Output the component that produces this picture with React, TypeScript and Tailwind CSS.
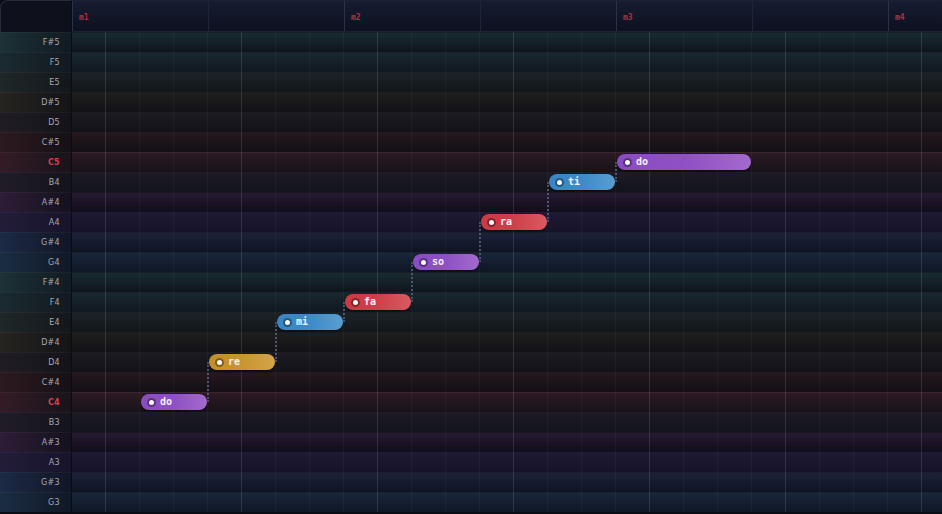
import React from 'react';

const ROWS = ['F#5', 'F5', 'E5', 'D#5', 'D5', 'C#5', 'C5', 'B4', 'A#4', 'A4', 'G#4', 'G4', 'F#4', 'F4', 'E4', 'D#4', 'D4', 'C#4', 'C4', 'B3', 'A#3', 'A3', 'G#3', 'G3'];

// per pitch class tint: [lane, key cell]
const TINT: Record<string, { lane: string; key: string }> = {
    'F#': { lane: 'bg-linear-to-b from-[#1a2b31] to-[#0e151c]', key: 'bg-linear-to-r from-[#1c3236] to-[#121a22]' },
    F: { lane: 'bg-linear-to-b from-[#192830] to-[#10181f]', key: 'bg-linear-to-r from-[#1a2b30] to-[#121920]' },
    E: { lane: 'bg-linear-to-b from-[#1c2326] to-[#12161b]', key: 'bg-linear-to-r from-[#1f2728] to-[#13171c]' },
    'D#': { lane: 'bg-linear-to-b from-[#201f1e] to-[#121215]', key: 'bg-linear-to-r from-[#25241f] to-[#141417]' },
    D: { lane: 'bg-linear-to-b from-[#1c1b22] to-[#121218]', key: 'bg-linear-to-r from-[#201e24] to-[#131319]' },
    'C#': { lane: 'bg-linear-to-b from-[#26181e] to-[#130f15]', key: 'bg-linear-to-r from-[#2c1a1f] to-[#151117]' },
    C: { lane: 'bg-linear-to-b from-[#2c1a23] to-[#17121a]', key: 'bg-linear-to-r from-[#341c25] to-[#18131b]' },
    B: { lane: 'bg-linear-to-b from-[#1c1b25] to-[#13131c]', key: 'bg-linear-to-r from-[#201d28] to-[#14141c]' },
    'A#': { lane: 'bg-linear-to-b from-[#271a32] to-[#100d18]', key: 'bg-linear-to-r from-[#2d1d37] to-[#15111d]' },
    A: { lane: 'bg-linear-to-b from-[#1f1a34] to-[#161329]', key: 'bg-linear-to-r from-[#231c39] to-[#16142a]' },
    'G#': { lane: 'bg-linear-to-b from-[#1b2239] to-[#0f1323]', key: 'bg-linear-to-r from-[#1c2a45] to-[#111626]' },
    G: { lane: 'bg-linear-to-b from-[#18263b] to-[#0f1624]', key: 'bg-linear-to-r from-[#1a2e43] to-[#101826]' },
};

const NOTE_COLORS: Record<string, string> = {
    purple: 'bg-linear-to-r from-[#8a4cc2] via-[#8e50c4] to-[#a36acc]',
    gold: 'bg-linear-to-r from-[#c28f2c] via-[#c8952f] to-[#d3a449]',
    blue: 'bg-linear-to-r from-[#3a84c4] via-[#3e8ac8] to-[#599ed1]',
    red: 'bg-linear-to-r from-[#c93a44] via-[#cf3f49] to-[#d95a62]',
};

const NOTES = [
    { label: 'do', row: 18, beat: 1, len: 1, color: 'purple' },
    { label: 're', row: 16, beat: 2, len: 1, color: 'gold' },
    { label: 'mi', row: 14, beat: 3, len: 1, color: 'blue' },
    { label: 'fa', row: 13, beat: 4, len: 1, color: 'red' },
    { label: 'so', row: 11, beat: 5, len: 1, color: 'purple' },
    { label: 'ra', row: 9, beat: 6, len: 1, color: 'red' },
    { label: 'ti', row: 7, beat: 7, len: 1, color: 'blue' },
    { label: 'do', row: 6, beat: 8, len: 2, color: 'purple' },
];

const BEAT = 68;
const ROW_H = 20;

function pitchClass(name: string) {
    return name.replace(/\d/g, '');
}

export default function App() {
    return (
        <div className="w-[942px] h-[514px] overflow-hidden bg-[#0b0d16]">
            {/* Ruler */}
            <div className="flex h-[32px]">
                <div className="w-[72px] shrink-0 rounded-tl-lg border-t border-l border-[#262b3c] border-r border-r-[#0a0c14] bg-[#0e111c]" />
                <div className="flex flex-1 overflow-hidden bg-linear-to-b from-[#161c31] to-[#0d1120] border-t border-[#1c2236] border-b border-b-[#1e2334]">
                    {Array.from({ length: 7 }).map((_, i) => (
                        <div
                            key={i}
                            className={`w-[136px] shrink-0 border-l ${i % 2 === 0 ? 'border-[#2c3148]' : 'border-[#1f2438]'}`}
                        >
                            {i % 2 === 0 && (
                                <span className="block pl-[6px] pt-[13px] text-[8px] font-bold leading-none text-[#b3303d]" style={{ fontFamily: '"DejaVu Sans Mono", monospace' }}>
                                    m{i / 2 + 1}
                                </span>
                            )}
                        </div>
                    ))}
                </div>
            </div>

            {/* Rows */}
            <div className="flex">
                <div className="w-[72px] shrink-0 border-r border-[#0a0c14]">
                    {ROWS.map((name) => {
                        const isC = pitchClass(name) === 'C';
                        return (
                            <div
                                key={name}
                                className={`h-[20px] flex items-center justify-end pr-[11px] border-t border-white/[0.04] ${TINT[pitchClass(name)].key}`}
                            >
                                <span
                                    className={`text-[8px] leading-none tracking-[0.3px] ${isC ? 'text-[#d9404c] font-bold' : 'text-[#a3a8b8]'}`}
                                    style={{ fontFamily: '"DejaVu Sans", sans-serif' }}
                                >
                                    {name}
                                </span>
                            </div>
                        );
                    })}
                </div>

                <div className="relative flex-1 overflow-hidden">
                    {ROWS.map((name) => (
                        <div
                            key={name}
                            className={`h-[20px] border-t ${pitchClass(name) === 'C' ? 'border-[#3a2630]' : 'border-white/[0.045]'} ${TINT[pitchClass(name)].lane}`}
                        />
                    ))}

                    {/* grid columns */}
                    <div className="absolute inset-0 flex pointer-events-none">
                        {Array.from({ length: 26 }).map((_, k) => (
                            <div
                                key={k}
                                className={`w-[34px] shrink-0 border-r ${k % 4 === 0 ? 'border-white/[0.11]' : 'border-white/[0.035]'}`}
                            />
                        ))}
                    </div>

                    {/* connectors */}
                    {NOTES.slice(1).map((n, i) => {
                        const prev = NOTES[i];
                        const top = n.row * ROW_H + 10;
                        const bottom = prev.row * ROW_H + 10;
                        return (
                            <div
                                key={`c${i}`}
                                className="absolute w-0 border-l-2 border-dotted border-[#4e5570]"
                                style={{ left: n.beat * BEAT - 1, top, height: bottom - top }}
                            />
                        );
                    })}

                    {/* notes */}
                    {NOTES.map((n, i) => (
                        <div
                            key={i}
                            className={`absolute h-[16px] rounded-full flex items-center shadow-[0_1px_3px_rgba(0,0,0,0.6)] ${NOTE_COLORS[n.color]}`}
                            style={{ left: n.beat * BEAT + 1, top: n.row * ROW_H + 2, width: n.len * BEAT - 2 }}
                        >
                            <span className="ml-[6px] w-[9px] h-[9px] rounded-full bg-white border-2 border-black/35 bg-clip-padding" />
                            <span
                                className="ml-[4px] text-[10px] font-bold leading-none text-[#f4f0f6]"
                                style={{ fontFamily: '"DejaVu Sans Mono", monospace' }}
                            >
                                {n.label}
                            </span>
                        </div>
                    ))}
                </div>
            </div>
        </div>
    );
}
